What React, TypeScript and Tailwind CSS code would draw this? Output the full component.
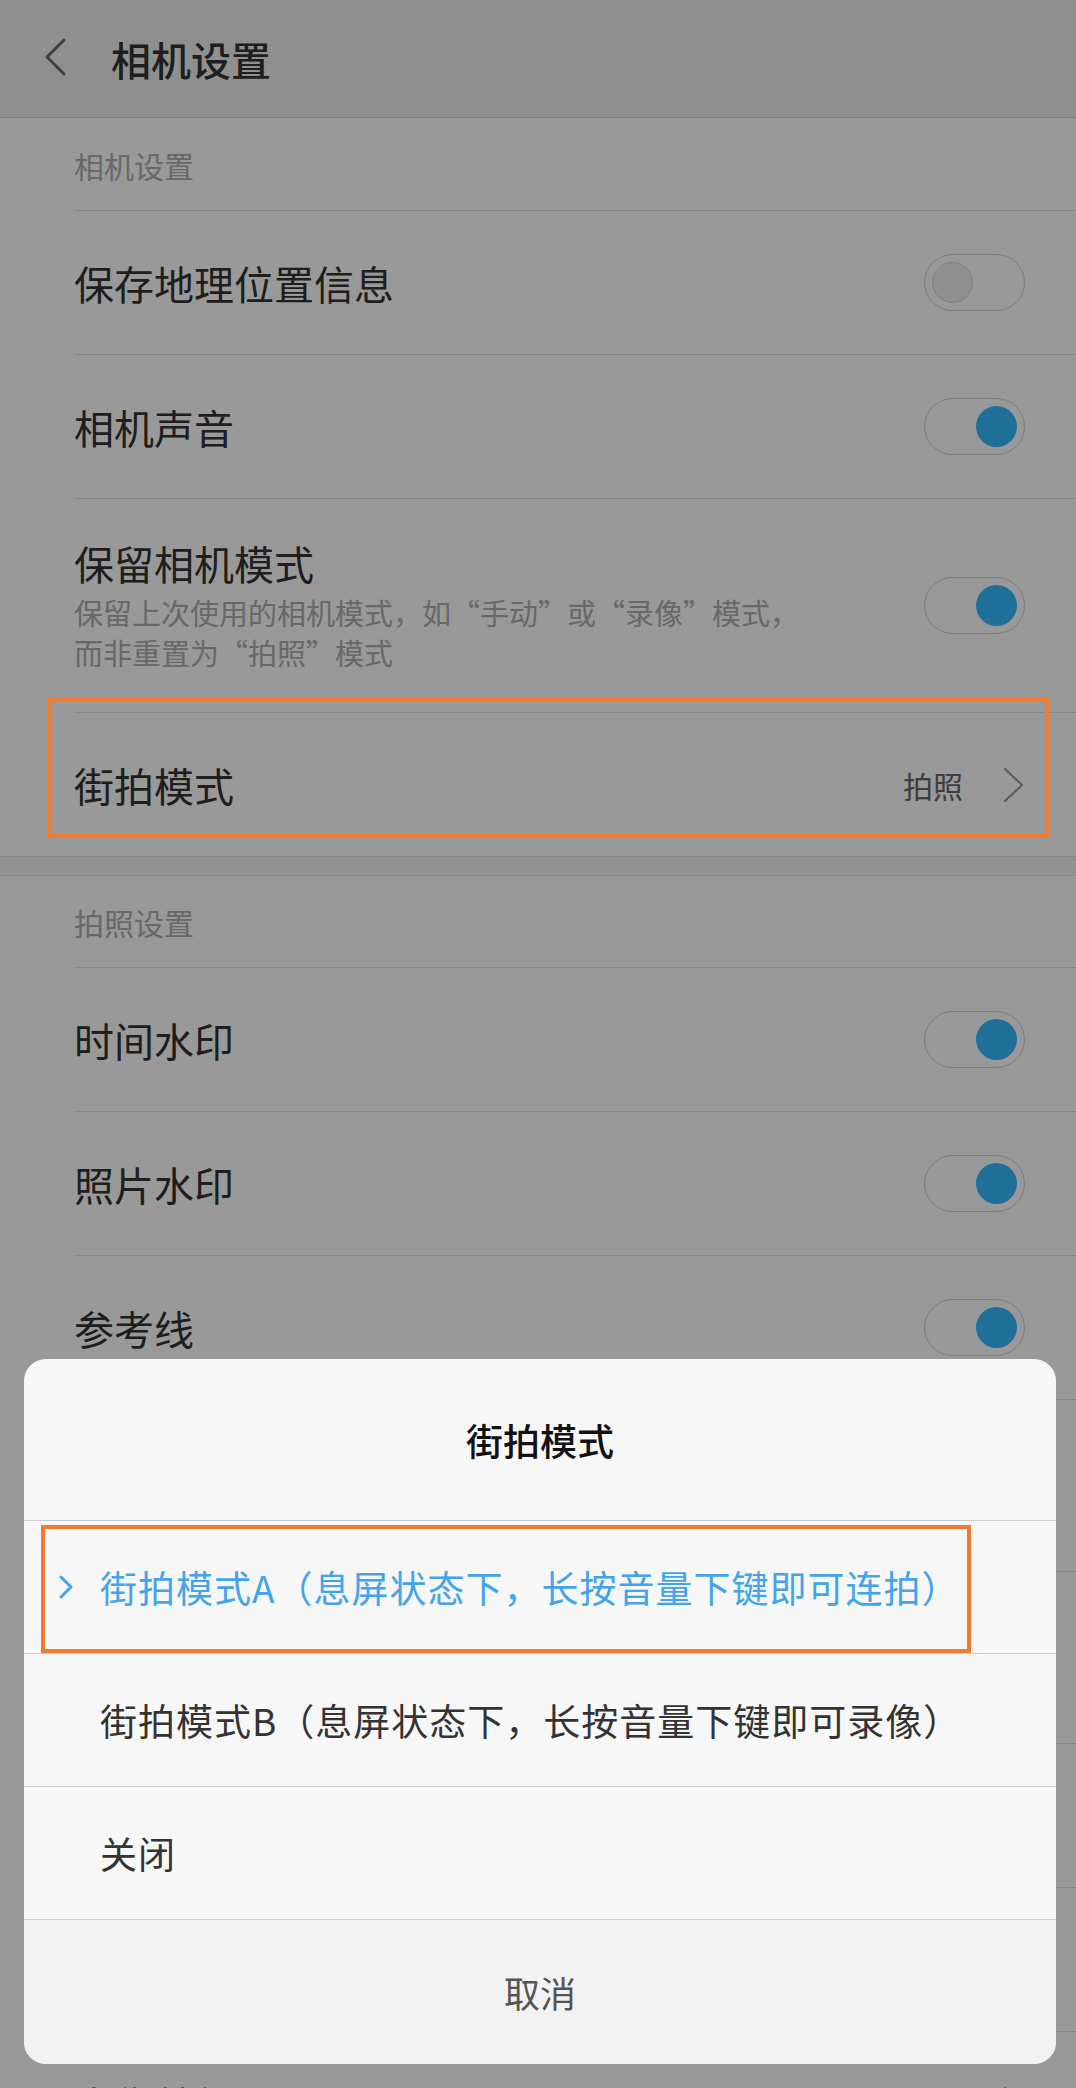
import React from 'react'

const font = "font-['Noto_Sans_CJK_SC','Noto_Sans',sans-serif]"

function Toggle({ on }: { on: boolean }) {
  return (
    <div
      className={`w-[101px] h-[57px] shrink-0 rounded-full border border-[#cfcfcf] flex items-center px-[7px] ${
        on ? 'justify-end' : 'justify-start'
      }`}
    >
      <div
        className={`w-[41px] h-[41px] rounded-full ${
          on ? 'bg-[#35b9ff]' : 'bg-[#eeeeee] border border-[#d3d3d3]'
        }`}
      />
    </div>
  )
}

function Row({
  title,
  desc,
  on,
  value,
  h = 'h-[144px]',
}: {
  title: string
  desc?: string[]
  on?: boolean
  value?: string
  h?: string
}) {
  return (
    <div className="pl-[74px]">
      <div className={`${h} border-t border-[#e2e2e2] pr-[51px] flex items-center justify-between`}>
        <div>
          <div className="text-[40px] leading-[48px] text-[#333]">{title}</div>
          {desc && (
            <div className="mt-[5px] text-[29px] leading-[40px] text-[#aeaeae]">
              {desc.map((d) => (
                <div key={d}>{d}</div>
              ))}
            </div>
          )}
        </div>
        {value !== undefined ? (
          <div className="flex items-center">
            <span className="text-[30px] leading-[40px] text-[#666]">{value}</span>
            <svg width="22" height="36" viewBox="0 0 22 36" className="ml-[40px]">
              <polyline
                points="2,2 19,18 2,34"
                fill="none"
                stroke="#999"
                strokeWidth="2.2"
                strokeLinecap="round"
                strokeLinejoin="round"
              />
            </svg>
          </div>
        ) : (
          on !== undefined && <Toggle on={on} />
        )}
      </div>
    </div>
  )
}

function SectionLabel({ text, h }: { text: string; h: string }) {
  return (
    <div className={`${h} flex items-end pb-[30px] pl-[74px]`}>
      <span className="text-[30px] leading-[30px] text-[#aeaeae]">{text}</span>
    </div>
  )
}

const options = [
  '街拍模式A（息屏状态下，长按音量下键即可连拍）',
  '街拍模式B（息屏状态下，长按音量下键即可录像）',
  '关闭',
]

export default function App() {
  const selected = 0

  return (
    <div className={`relative w-[1076px] h-[2088px] overflow-hidden bg-white ${font}`}>
      {/* 设置页 */}
      <div className="h-[118px] bg-[#efefef] border-b border-[#d1d1d1] flex items-center pl-[44px]">
        <svg width="24" height="40" viewBox="0 0 24 40" className="-mt-[4px]">
          <polyline
            points="20,3 3,20 20,37"
            fill="none"
            stroke="#6a6a6a"
            strokeWidth="3"
            strokeLinecap="round"
            strokeLinejoin="round"
          />
        </svg>
        <span className="ml-[43px] text-[40px] leading-[48px] font-medium text-[#333]">相机设置</span>
      </div>

      <SectionLabel text="相机设置" h="h-[92px]" />
      <Row title="保存地理位置信息" on={false} />
      <Row title="相机声音" on />
      <Row
        title="保留相机模式"
        desc={['保留上次使用的相机模式，如“手动”或“录像”模式，', '而非重置为“拍照”模式']}
        on
        h="h-[214px]"
      />
      <Row title="街拍模式" value="拍照" />

      <div className="h-[20px] bg-[#f5f5f5] border-y border-[#e2e2e2]" />

      <SectionLabel text="拍照设置" h="h-[91px]" />
      <Row title="时间水印" on />
      <Row title="照片水印" on />
      <Row title="参考线" on />
      {/* 弹窗下被遮住的几行，只露出右侧的分隔线 */}
      <Row title="" on h="h-[172px]" />
      <Row title="" on h="h-[172px]" />
      <Row title="" on={false} />
      <Row title="" on={false} />
      <Row title="人像美颜设置" value="" />

      {/* 遮罩 */}
      <div className="absolute inset-0 bg-black/40" />

      {/* 标注框 */}
      <div className="absolute left-[48px] top-[697px] w-[1001px] h-[141px] border-[4px] border-[#f47a2f]" />

      {/* 底部弹窗 */}
      <div className="absolute left-[24px] right-[20px] bottom-[24px] rounded-[22px] overflow-hidden bg-[#f7f7f7]">
        <div className="h-[162px] border-b border-[#cccccc] flex items-center justify-center">
          <span className="text-[37px] leading-[48px] font-medium text-[#111]">街拍模式</span>
        </div>
        {options.map((o, i) => (
          <div key={o} className="h-[133px] border-b border-[#cccccc] flex items-center pl-[34px]">
            <div className="w-[42px] shrink-0 flex items-center">
              {i === selected && (
                <svg width="16" height="26" viewBox="0 0 16 26">
                  <polyline
                    points="3,3 13,13 3,23"
                    fill="none"
                    stroke="#42a4ee"
                    strokeWidth="3"
                    strokeLinecap="round"
                    strokeLinejoin="round"
                  />
                </svg>
              )}
            </div>
            <span
              className={`text-[37px] leading-[48px] tracking-[1px] whitespace-nowrap ${
                i === selected ? 'text-[#42a4ee]' : 'text-[#333]'
              }`}
            >
              {o}
            </span>
          </div>
        ))}
        <div className="h-[144px] bg-[#f2f2f2] flex items-center justify-center">
          <span className="text-[36px] leading-[48px] text-[#555]">取消</span>
        </div>
      </div>

      <div className="absolute left-[41px] top-[1525px] w-[930px] h-[128px] border-[4px] border-[#f47a2f]" />
    </div>
  )
}
